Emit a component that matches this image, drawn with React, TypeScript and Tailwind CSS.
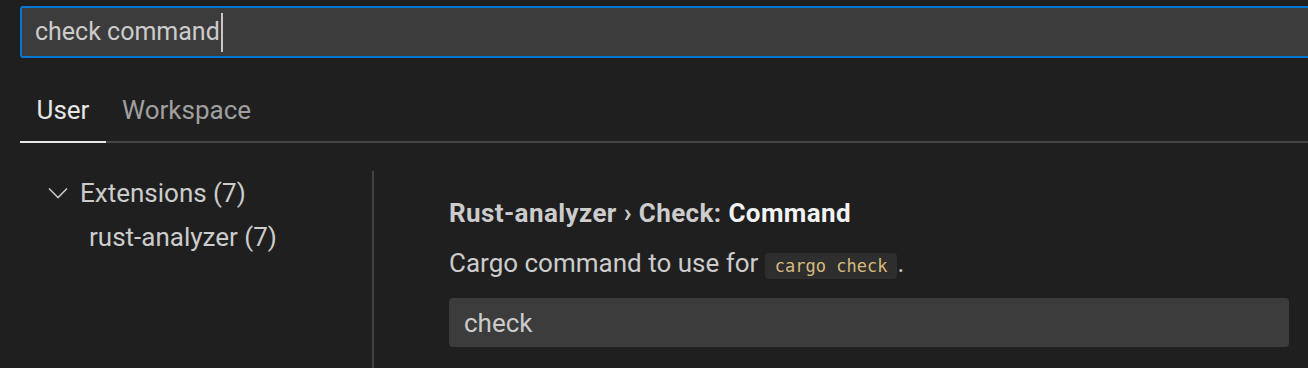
import React from "react";

export default function App() {
  return (
    <div className="w-[1308px] h-[368px] overflow-hidden bg-[#1f1f1f] font-['Roboto',_'Liberation_Sans',_sans-serif] text-[26px] text-[#cccccc]">
      {/* Search box */}
      <div className="ml-[20px] mt-[6px] flex h-[52px] w-[1320px] items-center rounded-[3px] border-2 border-[#0078d4] bg-[#3c3c3c] pl-[13px]">
        <span className="text-[25px] leading-[30px] text-[#cccccc]">check command</span>
        <span className="ml-[1px] h-[39px] w-[2px] bg-[#c8c8c8]" />
      </div>

      {/* Tabs */}
      <div className="ml-[20px] mt-[37px] flex w-[1320px] border-b-2 border-[#454545]">
        <div className="-mb-[2px] flex w-[86px] justify-center border-b-2 border-[#e7e7e7] pb-[16px] leading-[30px] text-[#e7e7e7]">
          User
        </div>
        <div className="px-[16px] pb-[16px] leading-[30px] text-[#a0a0a0]">Workspace</div>
      </div>

      {/* Body */}
      <div className="flex h-[230px] pt-[28px]">
        {/* Tree */}
        <div className="w-[372px] shrink-0">
          <div className="flex h-[44px] items-center pl-[48px]">
            <svg width="20" height="12" viewBox="0 0 20 12" className="mr-[12px]" fill="none">
              <path d="M1 1.5 L10 10.5 L19 1.5" stroke="#c5c5c5" strokeWidth="1.6" />
            </svg>
            <span className="leading-[44px]">Extensions (7)</span>
          </div>
          <div className="h-[44px] pl-[89px] leading-[44px]">rust-analyzer (7)</div>
        </div>

        {/* Separator */}
        <div className="w-[2px] shrink-0 self-stretch bg-[#424242]" />

        {/* Setting */}
        <div className="flex-1 pl-[75px] pt-[27px]">
          <div className="text-[26px] font-bold leading-[30px] tracking-[0.4px] text-[#cccccc]">
            Rust-analyzer › Check: <span className="text-[#f2f2f2]">Command</span>
          </div>
          <div className="mt-[20px] leading-[30px] text-[#cccccc]">
            Cargo command to use for{" "}
            <code className="rounded-[4px] bg-[#2e2e2e] px-[10px] py-[3px] font-['DejaVu_Sans_Mono',_monospace] text-[17px] text-[#d7ba7d]">
              cargo check
            </code>
            .
          </div>
          <div className="mt-[17px] flex h-[49px] w-[840px] items-center rounded-[4px] bg-[#3c3c3c] pl-[15px]">
            <span className="leading-[30px] text-[#cccccc]">check</span>
          </div>
        </div>
      </div>
    </div>
  );
}
